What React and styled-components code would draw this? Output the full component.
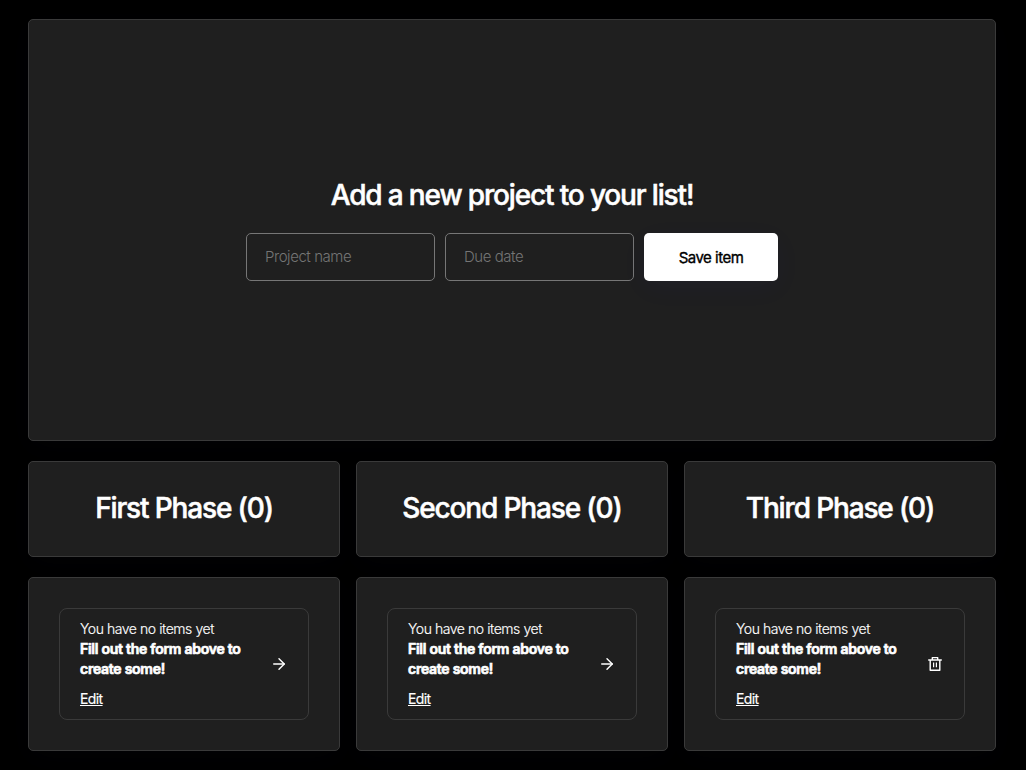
import React, { Fragment } from "react";
import styled, { createGlobalStyle, css } from "styled-components";
import { FiArrowRight } from "react-icons/fi";

const GlobalStyle = createGlobalStyle`
  * {
    box-sizing: border-box;
  }

  body {
    margin: 0;
    background: #000;
    color: #fff;
    font-family: "Inter", sans-serif;
    -webkit-font-smoothing: antialiased;
  }
`;

const phases = [
  { title: "First Phase", last: false },
  { title: "Second Phase", last: false },
  { title: "Third Phase", last: true }
];

export default function App() {
  return (
    <Fragment>
      <GlobalStyle />
      <Page>
        <Hero>
          <Title>Add a new project to your list!</Title>
          <Form onSubmit={e => e.preventDefault()}>
            <Input placeholder="Project name" />
            <Input placeholder="Due date" />
            <Button type="submit">Save item</Button>
          </Form>
        </Hero>
        <Columns>
          {phases.map(phase => (
            <Column key={phase.title}>
              <PhaseHeader>
                <Title>{phase.title} (0)</Title>
              </PhaseHeader>
              <PhaseBody>
                <Item>
                  <ItemText>
                    <span>You have no items yet</span>
                    <Hint>Fill out the form above to create some!</Hint>
                    <EditLink href="#">Edit</EditLink>
                  </ItemText>
                  <IconButton aria-label={phase.last ? "Delete" : "Next"}>
                    {phase.last ? <TrashIcon /> : <FiArrowRight size={18} strokeWidth={1.9} />}
                  </IconButton>
                </Item>
              </PhaseBody>
            </Column>
          ))}
        </Columns>
      </Page>
    </Fragment>
  );
}

const TrashIcon = () => (
  <svg
    width="18"
    height="18"
    viewBox="0 0 18 18"
    fill="none"
    stroke="currentColor"
    strokeWidth="1.4"
    strokeLinejoin="round"
  >
    <path d="M2.2 5h13.6M6.3 5V2.6h5.4V5M4.2 5v10.3h9.6V5" />
    <path d="M7.6 7.5v4.8M10.4 7.5v4.8" strokeWidth="1.2" />
  </svg>
);

const panel = css`
  background: #1f1f1f;
  border: 1px solid #3a3a3a;
  border-radius: 5px;
  box-shadow: 0 7px 29px rgba(100, 100, 255, 0.02);
`;

const Page = styled.main`
  padding: 19px 30px 19px 28px;
`;

const Hero = styled.section`
  ${panel}
  display: flex;
  flex-direction: column;
  align-items: center;
  height: 422px;
  padding-top: 157px;
`;

const Title = styled.h2`
  margin: 0;
  font-size: 28px;
  font-weight: 500;
  line-height: 36px;
  letter-spacing: -1.15px;
  -webkit-text-stroke: 0.5px #fff;
`;

const Form = styled.form`
  display: flex;
  gap: 10px;
  margin-top: 20px;
`;

const Input = styled.input`
  width: 189px;
  height: 48px;
  padding: 0 18px 2px;
  background: transparent;
  border: 1px solid #767676;
  border-radius: 5px;
  color: #fff;
  font-family: inherit;
  font-size: 15px;
  font-weight: 300;
  letter-spacing: -0.45px;

  &::placeholder {
    color: #757575;
  }
`;

const Button = styled.button`
  width: 134px;
  height: 48px;
  padding: 1px 0 0;
  background: #fff;
  border: 0;
  border-radius: 5px;
  box-shadow: 0 7px 29px rgba(60, 60, 255, 0.04);
  color: #000;
  font-family: inherit;
  font-size: 15px;
  font-weight: 400;
  letter-spacing: -0.5px;
  -webkit-text-stroke: 0.35px #000;
`;

const Columns = styled.div`
  display: grid;
  grid-template-columns: repeat(3, 1fr);
  gap: 16px;
  margin-top: 20px;
`;

const Column = styled.section`
  display: flex;
  flex-direction: column;
  gap: 20px;
`;

const PhaseHeader = styled.header`
  ${panel}
  display: flex;
  justify-content: center;
  height: 96px;
  padding-top: 28px;
`;

const PhaseBody = styled.div`
  ${panel}
  padding: 30px;
`;

const Item = styled.div`
  display: flex;
  align-items: center;
  height: 112px;
  padding: 0 20px;
  border: 1px solid #3a3a3a;
  border-radius: 8px;
`;

const ItemText = styled.div`
  display: flex;
  flex-direction: column;
  width: 178px;
  font-size: 14px;
  font-weight: 300;
  line-height: 20px;
  letter-spacing: -0.44px;
  -webkit-text-stroke: 0.15px #fff;
`;

const Hint = styled.strong`
  font-weight: 600;
  letter-spacing: -0.26px;
  -webkit-text-stroke: 0.7px #fff;
`;

const EditLink = styled.a`
  align-self: flex-start;
  margin-top: 10px;
  color: inherit;
  font-weight: 400;
  letter-spacing: -0.6px;
`;

const IconButton = styled.button`
  display: flex;
  margin: 0 0 0 auto;
  padding: 0;
  background: none;
  border: 0;
  color: #fff;
`;
